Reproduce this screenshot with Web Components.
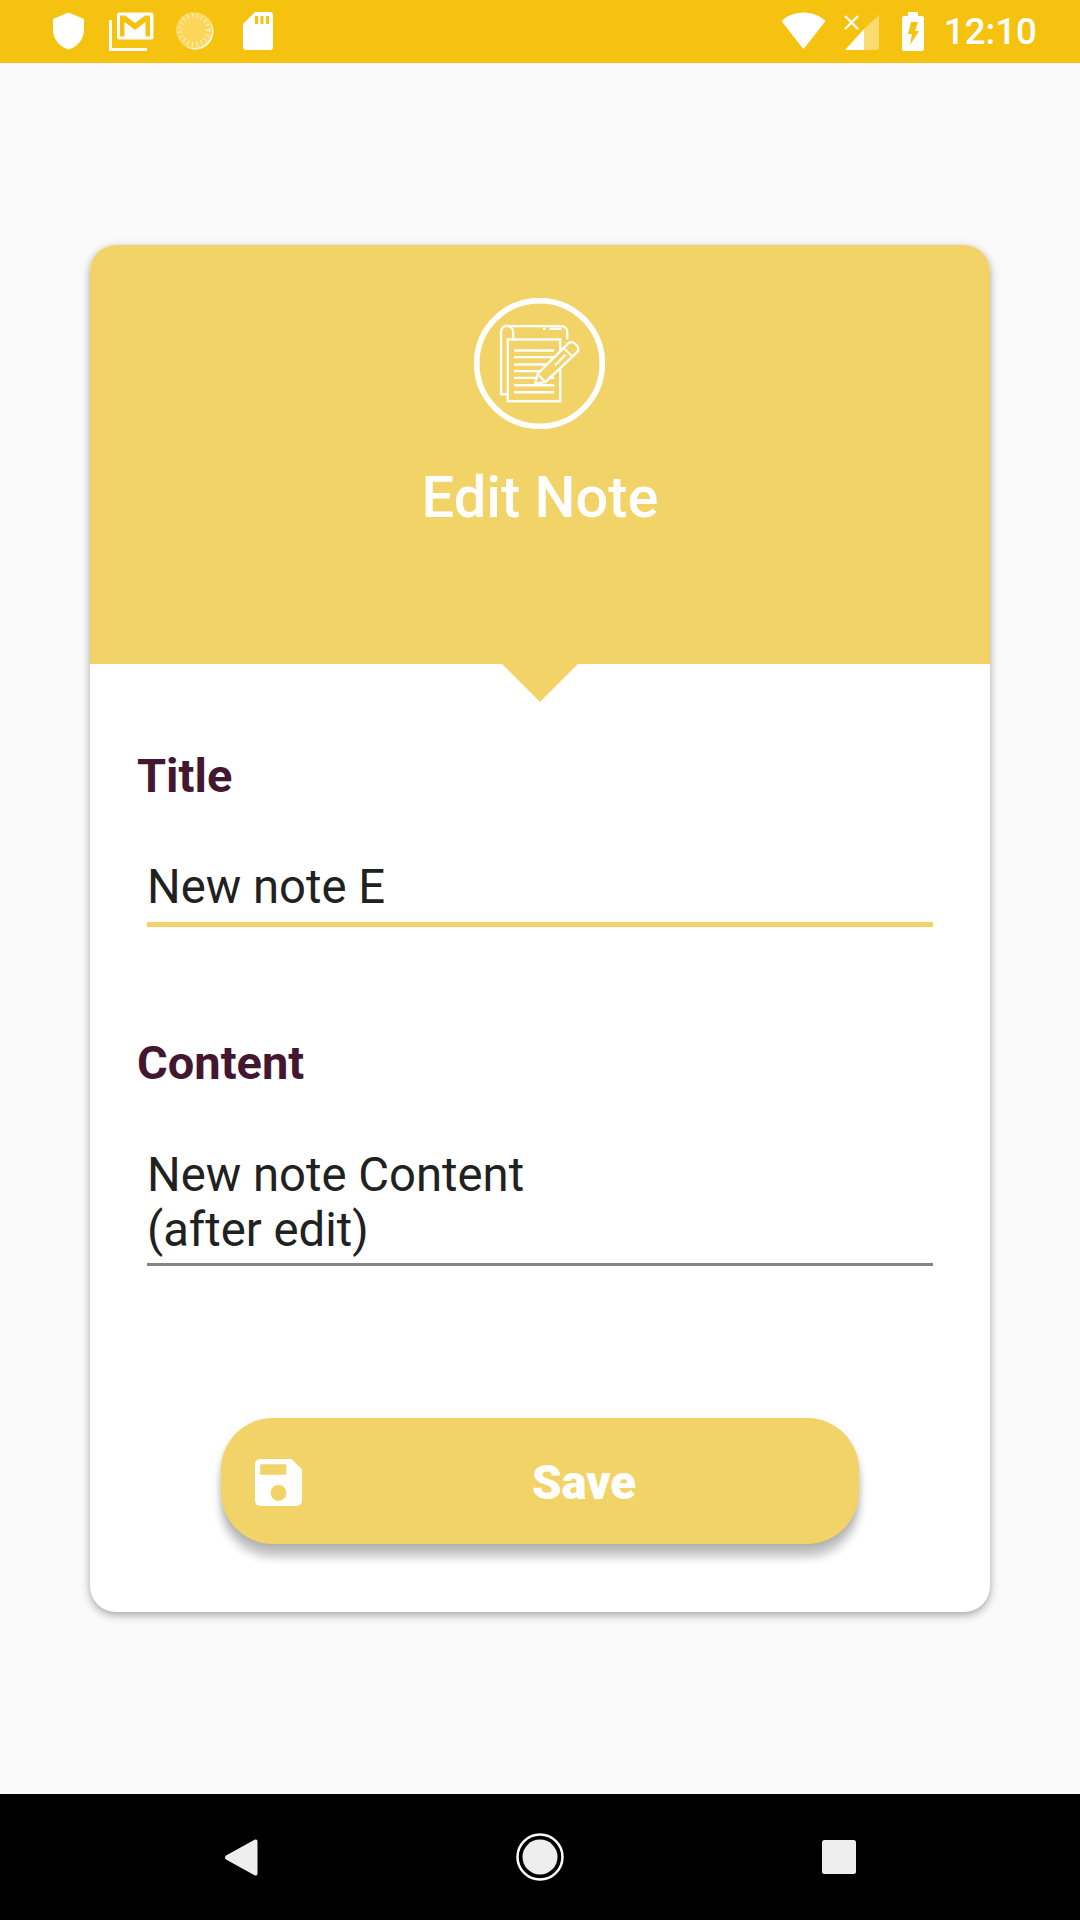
<!DOCTYPE html>
<html>
<head>
<meta charset="utf-8">
<title>Edit Note</title>
<style>
  html, body { margin: 0; padding: 0; background: #fafafa; }
  body { font-family: Roboto, "Liberation Sans", sans-serif; }
</style>
</head>
<body>
<app-screen>
  <status-bar slot="top"></status-bar>
  <note-card>
    <note-field label="Title" active>New note E</note-field>
    <note-field label="Content">New note Content<br>(after edit)</note-field>
    <save-button>Save</save-button>
  </note-card>
  <nav-bar slot="bottom"></nav-bar>
</app-screen>

<script>
// Pantalla completa: barra de estado, contenido y navegacion
class AppScreen extends HTMLElement {
    connectedCallback() {
        const shadowRoot = this.attachShadow({ mode: 'open' });
        shadowRoot.innerHTML = `
            <style>
                :host {
                    display: flex;
                    flex-direction: column;
                    width: 1080px;
                    height: 1920px;
                    background: #fafafa;
                    overflow: hidden;
                }
                main {
                    flex: 1;
                    padding: 182px 90px 0;
                }
            </style>
            <slot name="top"></slot>
            <main><slot></slot></main>
            <slot name="bottom"></slot>
        `;
    }
}
customElements.define('app-screen', AppScreen);

// Barra de estado con sus iconos
class StatusBar extends HTMLElement {
    connectedCallback() {
        const shadowRoot = this.attachShadow({ mode: 'open' });
        shadowRoot.innerHTML = `
            <style>
                :host {
                    display: flex;
                    align-items: flex-start;
                    height: 63px;
                    background: #f5c30f;
                    color: #fff;
                    font-family: Roboto, sans-serif;
                }
                svg { display: block; flex: none; }
                .left { display: flex; margin-left: 53px; }
                .right { display: flex; margin-left: auto; }
                .time {
                    font-size: 36.750px;
                    line-height: 63px;
                    font-weight: 500;
                    margin: 0 43px 0 20px;
                }
            </style>
            <div class="left">
                <svg width="31" height="38" viewBox="0 0 31 38" style="margin-top:12px">
                    <path d="M15.5 0.5 L31 7 V18 C31 27 24.500 35 15.500 37.500 C6.500 35 0 27 0 18 V7 Z" fill="#fff"/>
                </svg>
                <svg width="45" height="39" viewBox="0 0 45 39" style="margin:12px 0 0 25px">
                    <path d="M1.500 8 V37.500 H38" fill="none" stroke="#fff" stroke-width="3"/>
                    <path d="M8 3 a2.500 2.500 0 0 1 2.500-2.500 H42 a2.500 2.500 0 0 1 2.500 2.500 V25 a2.500 2.500 0 0 1-2.500 2.500 H10.500 a2.500 2.500 0 0 1-2.500-2.500 Z" fill="#fff"/>
                    <path d="M11 3.500 h5 L26 11 L36 3.500 h5 V24.500 H36.500 V10 L26 18 L15.500 10 V24.500 H11 Z" fill="#f5c30f"/>
                </svg>
                <svg width="38" height="38" viewBox="0 0 38 38" style="margin:12px 0 0 22px">
                    <circle cx="19.500" cy="19.500" r="18" fill="#fff" opacity=".85"/>
                    <circle cx="18" cy="18" r="18" fill="#fbd65a"/>
                    <circle cx="18" cy="18" r="14.500" fill="none" stroke="#fdeaa5" stroke-width="5" stroke-dasharray="1.500 3.200"/>
                </svg>
                <svg width="30" height="38" viewBox="0 0 30 38" style="margin:12px 0 0 29px">
                    <path d="M12 0 H27 a3 3 0 0 1 3 3 V35 a3 3 0 0 1-3 3 H3 a3 3 0 0 1-3-3 V12 Z" fill="#fff"/>
                    <path d="M12 4 h3 v8 h-3 Z M17.500 4 h3 v8 h-3 Z M23 4 h3 v8 h-3 Z" fill="#f5c30f"/>
                </svg>
            </div>
            <div class="right">
                <svg width="45" height="37" viewBox="0 0 45 37" style="margin-top:12px">
                    <path d="M0.500 9 C6 4 13.500 0.500 22.500 0.500 C31.500 0.500 39 4 44.500 9 L23.500 36 a1.300 1.300 0 0 1-2 0 Z" fill="#fff"/>
                </svg>
                <svg width="35" height="36" viewBox="0 0 35 36" style="margin:14px 0 0 18px">
                    <path d="M35 1 V34 a2 2 0 0 1-2 2 H20 V15 Z" fill="#fff" opacity=".4"/>
                    <path d="M20 15 V36 H1 Z" fill="#fff"/>
                    <path d="M1 2 L14 15 M14 2 L1 15" stroke="#fff" stroke-width="2.400" fill="none"/>
                </svg>
                <svg width="22" height="39" viewBox="0 0 22 39" style="margin:12px 0 0 23px">
                    <path d="M6 0 H16 V4 H20 a2 2 0 0 1 2 2 V37 a2 2 0 0 1-2 2 H2 a2 2 0 0 1-2-2 V6 a2 2 0 0 1 2-2 H6 Z" fill="#fff"/>
                    <path d="M9 10 H16 L13 19 H17 L8 33 L10 22 H6 Z" fill="#f5c30f"/>
                </svg>
                <span class="time">12:10</span>
            </div>
        `;
    }
}
customElements.define('status-bar', StatusBar);

// Tarjeta con cabecera amarilla y flecha
class NoteCard extends HTMLElement {
    connectedCallback() {
        const shadowRoot = this.attachShadow({ mode: 'open' });
        shadowRoot.innerHTML = `
            <style>
                :host {
                    display: block;
                    width: 900px;
                    height: 1367px;
                    background: #fff;
                    border-radius: 26px;
                    box-shadow: 0 3px 9px rgba(0, 0, 0, 0.35);
                    font-family: Roboto, sans-serif;
                }
                header {
                    position: relative;
                    height: 419px;
                    box-sizing: border-box;
                    padding-top: 53px;
                    background: #f2d368;
                    border-radius: 26px 26px 0 0;
                    color: #fff;
                    text-align: center;
                }
                header svg { display: block; margin-left: 384px; }
                h1 {
                    margin: 34px 0 0;
                    font-size: 57.750px;
                    line-height: 68px;
                    font-weight: 500;
                }
                /* la flecha va encima del formulario */
                header::after {
                    content: "";
                    position: absolute;
                    left: 412px;
                    top: 100%;
                    border-style: solid;
                    border-width: 38px 38px 0;
                    border-color: #f2d368 transparent transparent;
                }
                form {
                    display: flex;
                    flex-direction: column;
                    padding: 84px 57px 0 47px;
                }
            </style>
            <header>
                <svg width="131" height="131" viewBox="102 54 392 392" fill="none" stroke="#fff">
                    <circle cx="298" cy="250" r="188" stroke-width="17"/>
                    <g stroke-width="7">
                        <path d="M203 342 H183 V155 a18 18 0 0 1 36 0 V178"/>
                        <path d="M200 138 H364 a17 17 0 0 1 17 17 V178"/>
                        <rect x="203" y="178" width="157" height="185"/>
                        <path d="M222 211 H342 M222 231 H342 M222 253 H342 M222 273 H342 M222 293 H342 M222 315 H342 M222 336 H342"/>
                        <path d="M308 146 H316 M328 146 H364"/>
                    </g>
                    <path d="M284 312 L293 280 L384 190 a14 14 0 0 1 20 0 L410 197 a14 14 0 0 1 0 20 L316 305 Z" fill="#f2d368" stroke-width="7"/>
                    <path d="M293 282 L314 304 M370 204 L396 228 M344 256 L376 224" stroke-width="6"/>
                </svg>
                <h1>Edit Note</h1>
            </header>
            <form><slot></slot></form>
        `;
    }
}
customElements.define('note-card', NoteCard);

// Campo con etiqueta y linea inferior
class NoteField extends HTMLElement {
    connectedCallback() {
        const active = this.hasAttribute('active');
        const shadowRoot = this.attachShadow({ mode: 'open' });
        shadowRoot.innerHTML = `
            <style>
                :host {
                    display: block;
                    margin-bottom: ${active ? 108 : 0}px;
                }
                label {
                    display: block;
                    color: #43172f;
                    font-size: 47px;
                    line-height: 56px;
                    font-weight: 700;
                }
                .value {
                    margin: ${active ? 56 : 57}px 0 0 10px;
                    padding-bottom: ${active ? 7 : 5}px;
                    color: #212121;
                    font-size: 47.250px;
                    line-height: 55px;
                    border-bottom: ${active ? '5px solid #f2d368' : '3px solid #858585'};
                }
            </style>
            <label>${this.getAttribute('label')}</label>
            <div class="value"><slot></slot></div>
        `;
    }
}
customElements.define('note-field', NoteField);

// Boton de guardar
class SaveButton extends HTMLElement {
    connectedCallback() {
        const shadowRoot = this.attachShadow({ mode: 'open' });
        shadowRoot.innerHTML = `
            <style>
                :host {
                    display: flex;
                    align-items: center;
                    width: 638px;
                    height: 126px;
                    margin: 152px 0 0 84px;
                    box-sizing: border-box;
                    padding: 0 34px;
                    background: #f2d368;
                    border-radius: 52px;
                    box-shadow: 0 13px 10px rgba(0, 0, 0, 0.24), 0 2px 7px rgba(0, 0, 0, 0.12);
                    color: #fff;
                    font-family: Roboto, sans-serif;
                    font-size: 47.250px;
                    font-weight: 900;
                }
                svg { display: block; flex: none; margin-top: 2px; }
                span { flex: 1; text-align: center; padding: 3px 0 0 41px; }
            </style>
            <svg width="47" height="47" viewBox="3 3 18 18">
                <path fill="#fff" d="M17 3H5c-1.110 0-2 .9-2 2v14c0 1.100.89 2 2 2h14c1.100 0 2-.9 2-2V7l-4-4zm-5 16c-1.660 0-3-1.340-3-3s1.340-3 3-3 3 1.340 3 3-1.340 3-3 3zm3-10H5V5h10v4z"/>
            </svg>
            <span><slot></slot></span>
        `;
    }
}
customElements.define('save-button', SaveButton);

// Barra de navegacion de Android
class NavBar extends HTMLElement {
    connectedCallback() {
        const shadowRoot = this.attachShadow({ mode: 'open' });
        shadowRoot.innerHTML = `
            <style>
                :host {
                    display: flex;
                    align-items: center;
                    height: 126px;
                    background: #000;
                }
                svg { display: block; flex: none; }
            </style>
            <svg width="33" height="37" viewBox="0 0 33 37" style="margin-left:225px">
                <path d="M30 0.500 a2 2 0 0 1 2.500 2 V34.500 a2 2 0 0 1-2.500 2 L1 20.500 a2.500 2.500 0 0 1 0-4 Z" fill="#eee"/>
            </svg>
            <svg width="48" height="48" viewBox="0 0 48 48" style="margin-left:258px">
                <circle cx="24" cy="24" r="22.500" fill="none" stroke="#fff" stroke-width="2.500"/>
                <circle cx="24" cy="24" r="17.500" fill="#eee"/>
            </svg>
            <svg width="34" height="34" viewBox="0 0 34 34" style="margin-left:258px">
                <rect width="34" height="34" rx="2.500" fill="#eee"/>
            </svg>
        `;
    }
}
customElements.define('nav-bar', NavBar);
</script>
</body>
</html>
